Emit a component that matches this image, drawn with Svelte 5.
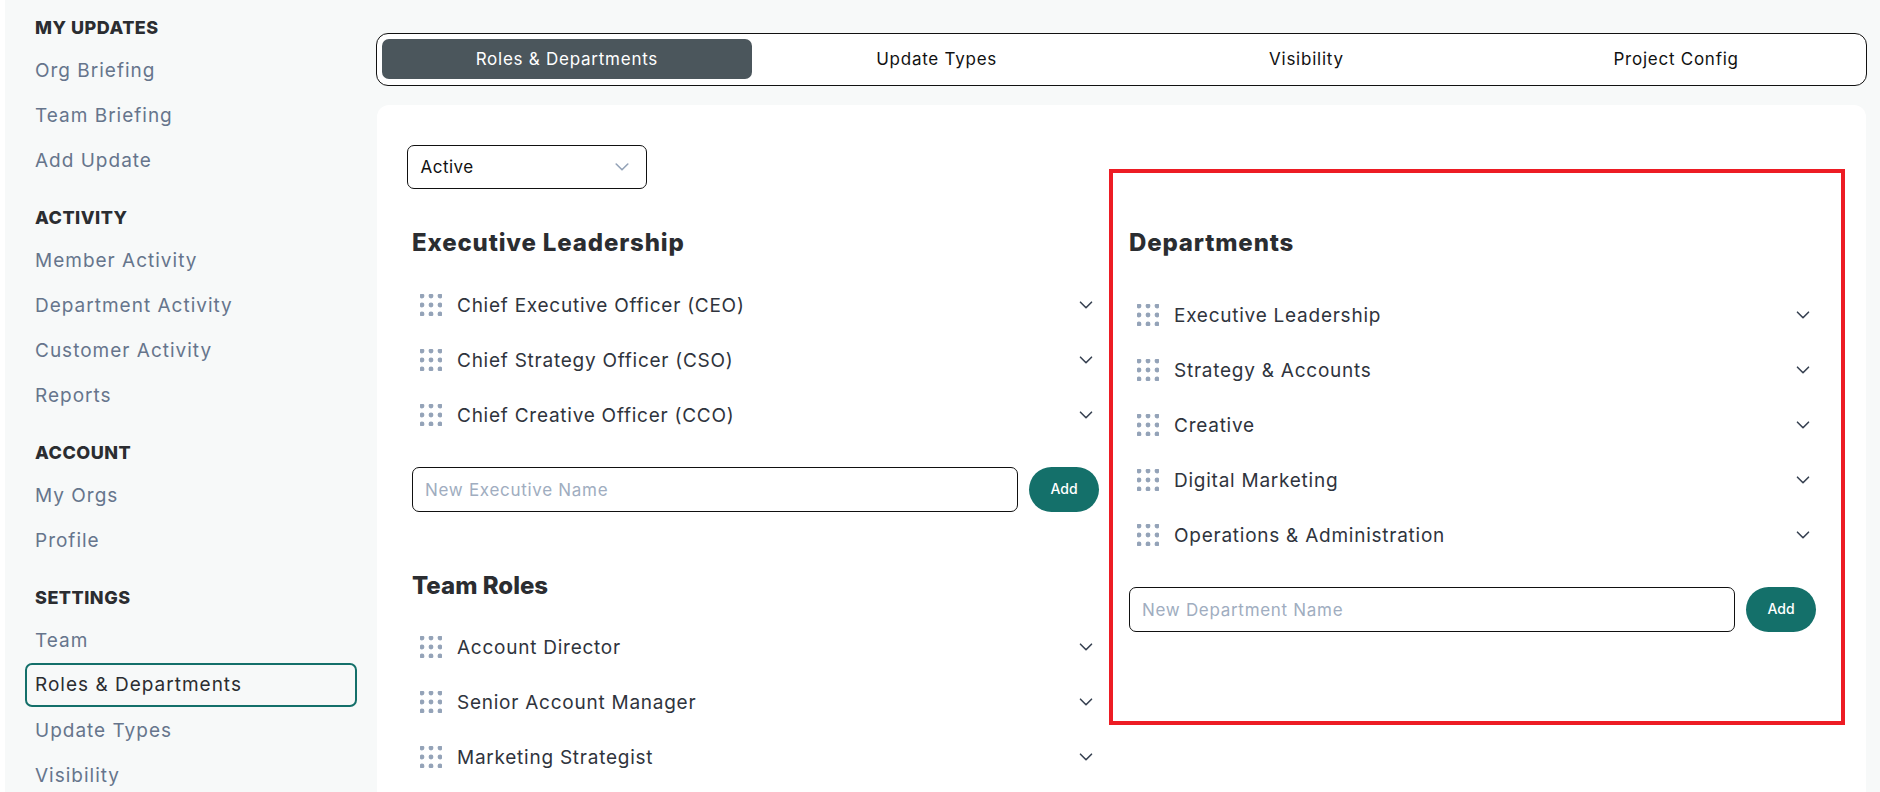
<script>
	// Sidebar sections and list data
	const nav = [
		{ title: 'My Updates', items: ['Org Briefing', 'Team Briefing', 'Add Update'] },
		{ title: 'Activity', items: ['Member Activity', 'Department Activity', 'Customer Activity', 'Reports'] },
		{ title: 'Account', items: ['My Orgs', 'Profile'] },
		{ title: 'Settings', items: ['Team', 'Roles & Departments', 'Update Types', 'Visibility'] }
	];
	const tabs = ['Roles & Departments', 'Update Types', 'Visibility', 'Project Config'];
	const executives = ['Chief Executive Officer (CEO)', 'Chief Strategy Officer (CSO)', 'Chief Creative Officer (CCO)'];
	const teamRoles = ['Account Director', 'Senior Account Manager', 'Marketing Strategist'];
	const departments = ['Executive Leadership', 'Strategy & Accounts', 'Creative', 'Digital Marketing', 'Operations & Administration'];
	const dots = [2, 11, 20];
</script>

{#snippet row(name)}
	<li class="row">
		<svg class="handle" width="22" height="22" viewBox="0 0 22 22" fill="#94a3b8">
			{#each dots as y}
				{#each dots as x}
					<circle cx={x} cy={y} r="2.4" />
				{/each}
			{/each}
		</svg>
		<span class="row-name">{name}</span>
		<svg class="chev" width="14" height="8" viewBox="0 0 14 8" fill="none" stroke="#374151" stroke-width="1.6" stroke-linecap="round" stroke-linejoin="round">
			<path d="M1.5 1.2 7 6.7l5.5-5.5" />
		</svg>
	</li>
{/snippet}

{#snippet addForm(placeholder)}
	<div class="add-form">
		<input type="text" {placeholder} />
		<button class="add">Add</button>
	</div>
{/snippet}

<div class="page">
	<aside class="sidebar">
		{#each nav as section}
			<h2>{section.title}</h2>
			<ul>
				{#each section.items as item}
					<li class:active={item === 'Roles & Departments'}>{item}</li>
				{/each}
			</ul>
		{/each}
	</aside>

	<main>
		<nav class="tabs">
			{#each tabs as tab, i}
				<button class="tab" class:current={i === 0}>{tab}</button>
			{/each}
		</nav>

		<section class="panel">
			<div class="select">
				<span>Active</span>
				<svg width="14" height="8" viewBox="0 0 14 8" fill="none" stroke="#94a3b8" stroke-width="1.6" stroke-linecap="round" stroke-linejoin="round">
					<path d="M1.2 1 7 6.8 12.8 1" />
				</svg>
			</div>

			<div class="columns">
				<div class="col">
					<h3>Executive Leadership</h3>
					<ul class="list">
						{#each executives as name}
							{@render row(name)}
						{/each}
					</ul>
					{@render addForm('New Executive Name')}

					<h3 class="second">Team Roles</h3>
					<ul class="list tight">
						{#each teamRoles as name}
							{@render row(name)}
						{/each}
					</ul>
				</div>

				<div class="col">
					<h3>Departments</h3>
					<ul class="list dept">
						{#each departments as name}
							{@render row(name)}
						{/each}
					</ul>
					{@render addForm('New Department Name')}
				</div>
			</div>
		</section>
	</main>

	<!-- red annotation drawn over the departments column -->
	<div class="callout"></div>
</div>

<style>
	:global(body) {
		margin: 0;
		background: #fff;
	}

	.page {
		position: relative;
		display: flex;
		height: 792px;
		margin-left: 5px;
		overflow: hidden;
		background: #f7f9f9;
		font-family: Inter, "Noto Sans", sans-serif;
		color: #2b2f36;
	}

	ul {
		list-style: none;
		margin: 0;
		padding: 0;
	}

	/* sidebar */
	.sidebar {
		flex: none;
		box-sizing: border-box;
		width: 371px;
		padding: 13.5px 0 0 30px;
	}

	h2 {
		margin: 0 0 7px;
		font-size: 18px;
		line-height: 27px;
		font-weight: 800;
		letter-spacing: 0.5px;
		text-transform: uppercase;
		color: #2b2d31;
	}

	.sidebar ul {
		margin-bottom: 21px;
	}

	.sidebar li {
		box-sizing: border-box;
		height: 45px;
		line-height: 45px;
		font-size: 19px;
		letter-spacing: 1px;
		color: #66758c;
	}

	.sidebar li.active {
		width: 332px;
		margin-left: -10px;
		padding-left: 8px;
		height: 44.5px;
		margin-bottom: 0.5px;
		line-height: 40.5px;
		border: 2px solid #14706a;
		border-radius: 7px;
		color: #2b2d31;
	}

	/* main area */
	main {
		flex: none;
		width: 1491px;
		padding-top: 33px;
	}

	.tabs {
		box-sizing: border-box;
		display: flex;
		height: 53px;
		padding: 5px;
		border: 1.5px solid #111;
		border-radius: 12px;
		background: #fff;
	}

	.tab {
		flex: 1;
		height: 40px;
		padding: 0 0 1px;
		border: 0;
		border-radius: 7px;
		background: none;
		font: 400 17px Inter, "Noto Sans", sans-serif;
		letter-spacing: 0.75px;
		color: #111;
	}

	.tab.current {
		background: #4b565c;
		color: #fff;
	}

	.panel {
		box-sizing: border-box;
		width: 1489px;
		height: 700px;
		margin: 19px 0 0 1px;
		padding: 40px 0 0 30px;
		border-radius: 12px;
		background: #fff;
	}

	.select {
		box-sizing: border-box;
		display: flex;
		align-items: center;
		justify-content: space-between;
		width: 240px;
		height: 44px;
		padding: 0 17px 0 12.5px;
		border: 1.5px solid #111;
		border-radius: 7px;
		font-size: 17px;
		letter-spacing: 0.5px;
		color: #111;
	}

	.columns {
		display: grid;
		grid-template-columns: 698px 698px;
		column-gap: 19px;
		margin-top: 36px;
	}

	.col {
		padding: 0 5px;
	}

	h3 {
		margin: 0;
		font-size: 24px;
		line-height: 36px;
		font-weight: 800;
		letter-spacing: 0.85px;
		color: #2b2d31;
	}

	h3.second {
		margin-top: 56px;
		letter-spacing: 0;
	}

	.list {
		margin-top: 16.5px;
	}

	.list.tight {
		margin-top: 15.5px;
	}

	.list.dept {
		margin-top: 26.5px;
	}

	.row {
		display: flex;
		align-items: center;
		height: 55px;
		padding: 0 7.5px 0 8px;
	}

	.row-name {
		flex: 1;
		margin-left: 15px;
		font-size: 19px;
		letter-spacing: 0.75px;
		color: #2f343d;
	}

	.add-form {
		display: flex;
		gap: 11px;
		margin-top: 24.5px;
	}

	.add-form input {
		box-sizing: border-box;
		flex: none;
		width: 606px;
		height: 45px;
		padding: 0 12px;
		border: 1.5px solid #111;
		border-radius: 7px;
		outline: none;
		font: 400 17px Inter, "Noto Sans", sans-serif;
		letter-spacing: 0.7px;
		color: #111;
	}

	.add-form input::placeholder {
		color: #a0adc0;
		opacity: 1;
	}

	.add {
		width: 70px;
		height: 45px;
		padding: 0 0 2px;
		border: 0;
		border-radius: 22.5px;
		background: #14706a;
		font: 500 14px Inter, "Noto Sans", sans-serif;
		color: #fff;
	}

	.callout {
		position: absolute;
		left: 1104px;
		top: 169px;
		box-sizing: border-box;
		width: 736px;
		height: 556px;
		border: 4.5px solid #ed1c24;
		pointer-events: none;
	}
</style>
